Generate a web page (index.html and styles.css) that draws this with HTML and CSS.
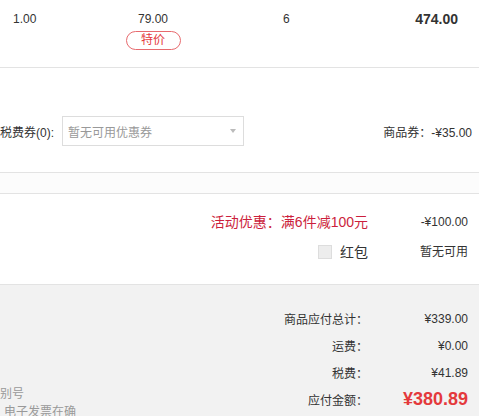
FILE: index.html
```html
<!DOCTYPE html>
<html lang="zh-CN">
<head>
<meta charset="UTF-8">
<meta name="viewport" content="width=device-width, initial-scale=1.0">
<title>订单结算</title>
<link rel="stylesheet" href="styles.css">
</head>
<body>

<div class="order">

    <!-- 商品行 -->
    <div class="item-row">
        <div class="cell cell-weight">1.00</div>
        <div class="cell cell-price">
            <div>79.00</div>
            <span class="tag">特价</span>
        </div>
        <div class="cell cell-qty">6</div>
        <div class="cell cell-sum">474.00</div>
    </div>

    <!-- 优惠券 -->
    <div class="coupon-row">
        <span class="coupon-label">税费券(0):</span>
        <div class="select">
            <span>暂无可用优惠券</span>
            <i class="caret"></i>
        </div>
        <span class="coupon-amount">商品券：-¥35.00</span>
    </div>

    <div class="spacer"></div>

    <!-- 活动 / 红包 -->
    <div class="promo">
        <div class="promo-label promo-red">活动优惠：满6件减100元</div>
        <div class="promo-val">-¥100.00</div>
        <div class="promo-label"><span class="check"></span><span class="hb">红包</span></div>
        <div class="promo-val">暂无可用</div>
    </div>

    <!-- 合计 -->
    <div class="summary">
        <div class="invoice">
            <div>别号</div>
            <div class="invoice-note">电子发票在确</div>
        </div>
        <div class="totals">
            <div class="t-label">商品应付总计：</div>
            <div class="t-val">¥339.00</div>
            <div class="t-label">运费：</div>
            <div class="t-val">¥0.00</div>
            <div class="t-label">税费：</div>
            <div class="t-val">¥41.89</div>
            <div class="t-label">应付金额：</div>
            <div class="t-val t-pay">¥380.89</div>
        </div>
    </div>

</div>

</body>
</html>
```

FILE: styles.css
```css
body { margin: 0; font-family: "Liberation Sans", "Noto Sans CJK SC", sans-serif; font-size: 12px; color: #333; background: #fff; }
.order { width: 479px; }

/* 商品行 */
.item-row {
    display: grid;
    grid-template-columns: 100px 106px 134px 1fr;
    height: 67px;
    border-bottom: 1px solid #e3e3e3;
}
.cell { padding-top: 10px; line-height: 18px; }
.cell-weight { padding-left: 13px; }
.cell-price { display: flex; flex-direction: column; align-items: center; }
.cell-qty { padding-left: 77px; }
.cell-sum { text-align: right; padding-right: 21px; font-size: 14px; font-weight: bold; }
.tag {
    margin-top: 3px;
    width: 53px;
    height: 17px;
    line-height: 17px;
    border: 1px solid #e76a6e;
    border-radius: 10px;
    color: #e4393c;
    font-size: 12px;
    text-align: center;
}

/* 优惠券 */
.coupon-row {
    display: flex;
    align-items: center;
    padding: 48px 7px 26px 0;
    border-bottom: 1px solid #e3e3e3;
}
.select {
    margin-left: 8px;
    width: 168px;
    height: 28px;
    padding: 0 7px 0 5px;
    border: 1px solid #ddd;
    display: flex;
    align-items: center;
    justify-content: space-between;
    color: #999;
}
.caret { width: 0; height: 0; border-left: 3px solid transparent; border-right: 3px solid transparent; border-top: 4px solid #bbb; }
.coupon-amount { margin-left: auto; }

.spacer { height: 20px; background: #fcfcfc; border-bottom: 1px solid #e3e3e3; }

/* 活动 / 红包 */
.promo {
    display: grid;
    grid-template-columns: 1fr 100px;
    row-gap: 10px;
    padding: 18px 11px 22px 0;
    line-height: 20px;
    border-bottom: 1px solid #e3e3e3;
}
.promo-label { text-align: right; font-size: 14px; display: flex; justify-content: flex-end; align-items: center; }
.promo-red { color: #cc1f3d; }
.promo-val { text-align: right; }
.check { width: 12px; height: 12px; border: 1px solid #ddd; background: #ededed; margin-right: 8px; }

/* 合计 */
.summary { display: flex; background: #f2f2f2; min-height: 140px; }
.invoice { flex: 1; padding-top: 100px; line-height: 18px; color: #999; }
.invoice-note { padding-left: 4px; }
.totals {
    width: 211px;
    display: grid;
    grid-template-columns: 1fr 100px;
    grid-auto-rows: 27px;
    align-items: center;
    padding: 20px 11px 0 0;
    align-content: start;
}
.t-label { text-align: right; }
.t-val { text-align: right; }
.t-pay { color: #e4393c; font-size: 18px; font-weight: bold; }
```
